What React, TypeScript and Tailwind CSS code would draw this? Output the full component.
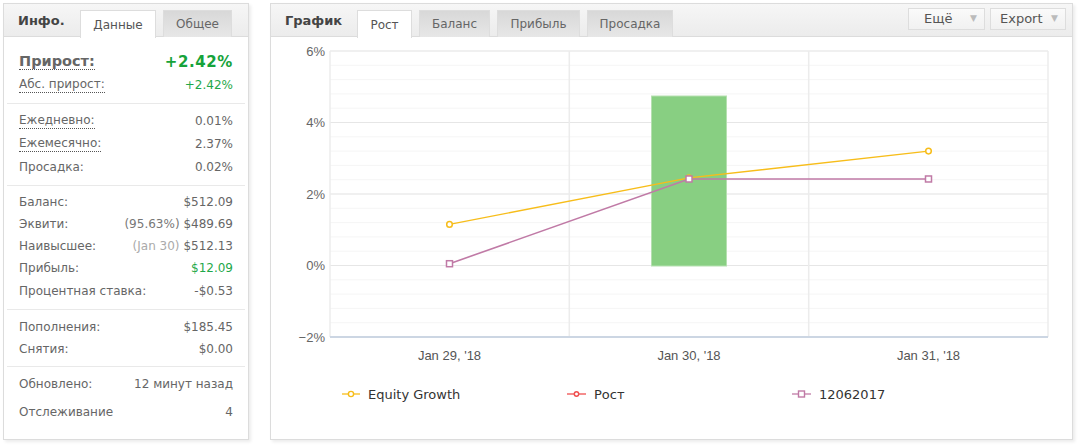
import React from "react";

type Row = { label: string; value: React.ReactNode; dotted?: boolean; big?: boolean; green?: boolean };

const groups: { rows: Row[]; cls: string; h: string }[] = [
  {
    cls: "pt-[13px] pb-[6px]",
    h: "h-[22.5px]",
    rows: [
      { label: "Прирост:", value: "+2.42%", dotted: true, big: true, green: true },
      { label: "Абс. прирост:", value: "+2.42%", dotted: true, green: true },
    ],
  },
  {
    cls: "pt-[6px] pb-[6px]",
    h: "h-[23px]",
    rows: [
      { label: "Ежедневно:", value: "0.01%", dotted: true },
      { label: "Ежемесячно:", value: "2.37%", dotted: true },
      { label: "Просадка:", value: "0.02%" },
    ],
  },
  {
    cls: "pt-[5px] pb-[7px]",
    h: "h-[22.25px]",
    rows: [
      { label: "Баланс:", value: "$512.09" },
      {
        label: "Эквити:",
        value: (
          <>
            <span className="text-[#777]">(95.63%)</span> $489.69
          </>
        ),
      },
      {
        label: "Наивысшее:",
        value: (
          <>
            <span className="text-[#aaa]">(Jan 30)</span> $512.13
          </>
        ),
      },
      { label: "Прибыль:", value: "$12.09", green: true },
      { label: "Процентная ставка:", value: "-$0.53" },
    ],
  },
  {
    cls: "pt-[6px] pb-[6px]",
    h: "h-[22px]",
    rows: [
      { label: "Пополнения:", value: "$185.45" },
      { label: "Снятия:", value: "$0.00" },
    ],
  },
];

const font = { fontFamily: '"DejaVu Sans", Tahoma, sans-serif' };

function InfoRow({ r, h = "h-[22px]" }: { r: Row; h?: string }) {
  return (
    <div className={`flex items-center justify-between ${r.big ? "h-[24px]" : h}`}>
      <span
        className={`${r.big ? "text-[14.5px] font-bold text-[#666]" : "text-[12px] text-[#666]"} ${
          r.dotted ? "border-b border-dotted border-[#555] leading-[15px]" : ""
        }`}
      >
        {r.label}
      </span>
      <span
        className={`${r.big ? "text-[15px] font-bold tracking-[0.6px]" : "text-[12px]"} ${
          r.green ? (r.big ? "text-[#16a33a]" : "text-[#1fa84a]") : "text-[#666]"
        }`}
      >
        {r.value}
      </span>
    </div>
  );
}

function Tab({ label, active, w }: { label: string; active?: boolean; w: string }) {
  return (
    <div
      className={`${w} h-[27px] mt-[6px] flex items-center justify-center text-[12px] border border-[#ddd] border-b-0 ${
        active
          ? "bg-white text-[#555] h-[28px] -mb-px relative"
          : "bg-gradient-to-b from-[#d8d8d8] to-[#e7e7e7] text-[#666]"
      }`}
    >
      {label}
    </div>
  );
}

function Chart() {
  const top = 51;
  const step = 71.5;
  const minor: number[] = [];
  for (let i = 0; i <= 20; i++) minor.push(top + (i * step) / 5);
  const majors = [0, 1, 2, 3, 4].map((i) => top + i * step);
  const yl = ["6%", "4%", "2%", "0%", "\u22122%"];
  const xs = [449.5, 689, 928.5];
  const yToPx = (v: number) => top + ((6 - v) / 2) * step;
  const eq = [1.15, 2.45, 3.2];
  const pr = [0.05, 2.42, 2.42];
  return (
    <svg width={801} height={402} className="block">
      <g transform="translate(-271,-37)">
        {minor.map((y, i) => (
          <line key={i} x1={330} x2={1048} y1={y} y2={y} stroke="#f5f5f5" strokeWidth={1} />
        ))}
        {majors.map((y, i) => (
          <line key={"m" + i} x1={330} x2={1048} y1={y} y2={y} stroke="#e6e6e6" strokeWidth={1} />
        ))}
        {[330, 569.3, 808.7, 1048].map((x, i) => (
          <line key={"v" + i} x1={x} x2={x} y1={51} y2={337} stroke="#ececec" strokeWidth={1.5} />
        ))}
        <line x1={330} x2={1048} y1={337} y2={337} stroke="#ccd6e3" strokeWidth={2} />
        {yl.map((t, i) => (
          <text
            key={t}
            x={325}
            y={majors[i] + 4.5}
            textAnchor="end"
            fontSize={13}
            fill="#666"
            fontFamily='"Liberation Sans", Arial, sans-serif'
          >
            {t}
          </text>
        ))}
        {["Jan 29, '18", "Jan 30, '18", "Jan 31, '18"].map((t, i) => (
          <text
            key={t}
            x={xs[i]}
            y={360}
            textAnchor="middle"
            fontSize={13}
            fill="#555"
            fontFamily='"Liberation Sans", Arial, sans-serif'
          >
            {t}
          </text>
        ))}
        <rect x={651.5} y={96} width={75} height={266 - 96} fill="#88cf82" stroke="#b5e0b0" strokeWidth={1} />
        <polyline
          points={xs.map((x, i) => `${x},${yToPx(eq[i])}`).join(" ")}
          fill="none"
          stroke="#f7bd1a"
          strokeWidth={1.3}
        />
        <polyline
          points={xs.map((x, i) => `${x},${yToPx(pr[i])}`).join(" ")}
          fill="none"
          stroke="#c07aa6"
          strokeWidth={1.6}
        />
        {xs.map((x, i) => (
          <circle key={"c" + i} cx={x} cy={yToPx(eq[i])} r={2.8} fill="#fff" stroke="#f7bd1a" strokeWidth={1.5} />
        ))}
        {xs.map((x, i) => (
          <rect
            key={"s" + i}
            x={x - 3}
            y={yToPx(pr[i]) - 3}
            width={6}
            height={6}
            fill="#fff"
            stroke="#c07aa6"
            strokeWidth={1.5}
          />
        ))}
        {/* legend */}
        <g fontFamily='"DejaVu Sans", Tahoma, sans-serif' fontSize={13} fill="#333">
          <line x1={342} x2={360} y1={394} y2={394} stroke="#f7bd1a" strokeWidth={1.3} />
          <circle cx={351} cy={394} r={2.6} fill="#fff" stroke="#f7bd1a" strokeWidth={1.4} />
          <text x={368} y={399}>Equity Growth</text>
          <line x1={567} x2={586} y1={394} y2={394} stroke="#f05050" strokeWidth={1.3} />
          <circle cx={576.5} cy={394} r={2.2} fill="#fff" stroke="#f05050" strokeWidth={1.4} />
          <text x={594} y={399}>Рост</text>
          <line x1={792} x2={811} y1={394} y2={394} stroke="#c07aa6" strokeWidth={1.3} />
          <rect x={798.5} y={391} width={6} height={6} fill="#fff" stroke="#c07aa6" strokeWidth={1.4} />
          <text x={819} y={399}>12062017</text>
        </g>
      </g>
    </svg>
  );
}

function DropBtn({ label, w, pl }: { label: string; w: string; pl: string }) {
  return (
    <div
      className={`${w} ${pl} h-[22px] flex items-center justify-between pr-[7px] border border-[#ddd] bg-gradient-to-b from-[#fafafa] to-[#f1f1f1] text-[13px] text-[#555]`}
    >
      <span>{label}</span>
      <span className="text-[9px] text-[#bbb]">▼</span>
    </div>
  );
}

export default function App() {
  return (
    <div className="w-[1082px] h-[445px] bg-white flex pt-[3px] pl-[3px]" style={font}>
      {/* left info panel */}
      <div className="w-[246px] h-[437px] border border-[#dcdcdc] shadow-[2px_2px_3px_rgba(0,0,0,0.08)] flex flex-col">
        <div className="h-[33px] flex bg-gradient-to-b from-[#f6f6f6] to-[#ececec] border-b border-[#dcdcdc] pl-[14px]">
          <div className="w-[62px] flex items-center pt-[1px] text-[13px] font-bold text-[#444]">Инфо.</div>
          <Tab label="Данные" active w="w-[76px]" />
          <div className="w-[7px]" />
          <Tab label="Общее" w="w-[69px]" />
        </div>
        <div className="flex-1 flex flex-col">
          {groups.map((g, gi) => (
            <div key={gi} className={`${gi > 0 ? "border-t border-[#e9e9e9]" : ""} mx-[3px] px-[12px] ${g.cls}`}>
              {g.rows.map((r) => (
                <InfoRow key={r.label} r={r} h={g.h} />
              ))}
            </div>
          ))}
          <div className="border-t border-[#e9e9e9] mx-[3px] px-[12px] pt-[6px]">
            <InfoRow r={{ label: "Обновлено:", value: "12 минут назад" }} />
            <div className="mt-[6px]">
              <InfoRow r={{ label: "Отслеживание", value: "4" }} />
            </div>
          </div>
        </div>
      </div>

      {/* right chart panel */}
      <div className="ml-[21px] w-[803px] h-[437px] border border-[#dcdcdc] shadow-[2px_2px_3px_rgba(0,0,0,0.08)] flex flex-col">
        <div className="h-[33px] flex bg-gradient-to-b from-[#f6f6f6] to-[#ececec] border-b border-[#dcdcdc] pl-[14px]">
          <div className="w-[72px] flex items-center pt-[1px] text-[13px] font-bold text-[#444]">График</div>
          <Tab label="Рост" active w="w-[55px]" />
          <div className="w-[7px]" />
          <Tab label="Баланс" w="w-[71px]" />
          <div className="w-[7px]" />
          <Tab label="Прибыль" w="w-[83px]" />
          <div className="w-[7px]" />
          <Tab label="Просадка" w="w-[86px]" />
          <div className="flex-1" />
          <div className="flex gap-[5px] pt-[4px] pr-[6px]">
            <DropBtn label="Ещё" w="w-[77px]" pl="pl-[15px]" />
            <DropBtn label="Export" w="w-[76px]" pl="pl-[9px]" />
          </div>
        </div>
        <Chart />
      </div>
    </div>
  );
}
